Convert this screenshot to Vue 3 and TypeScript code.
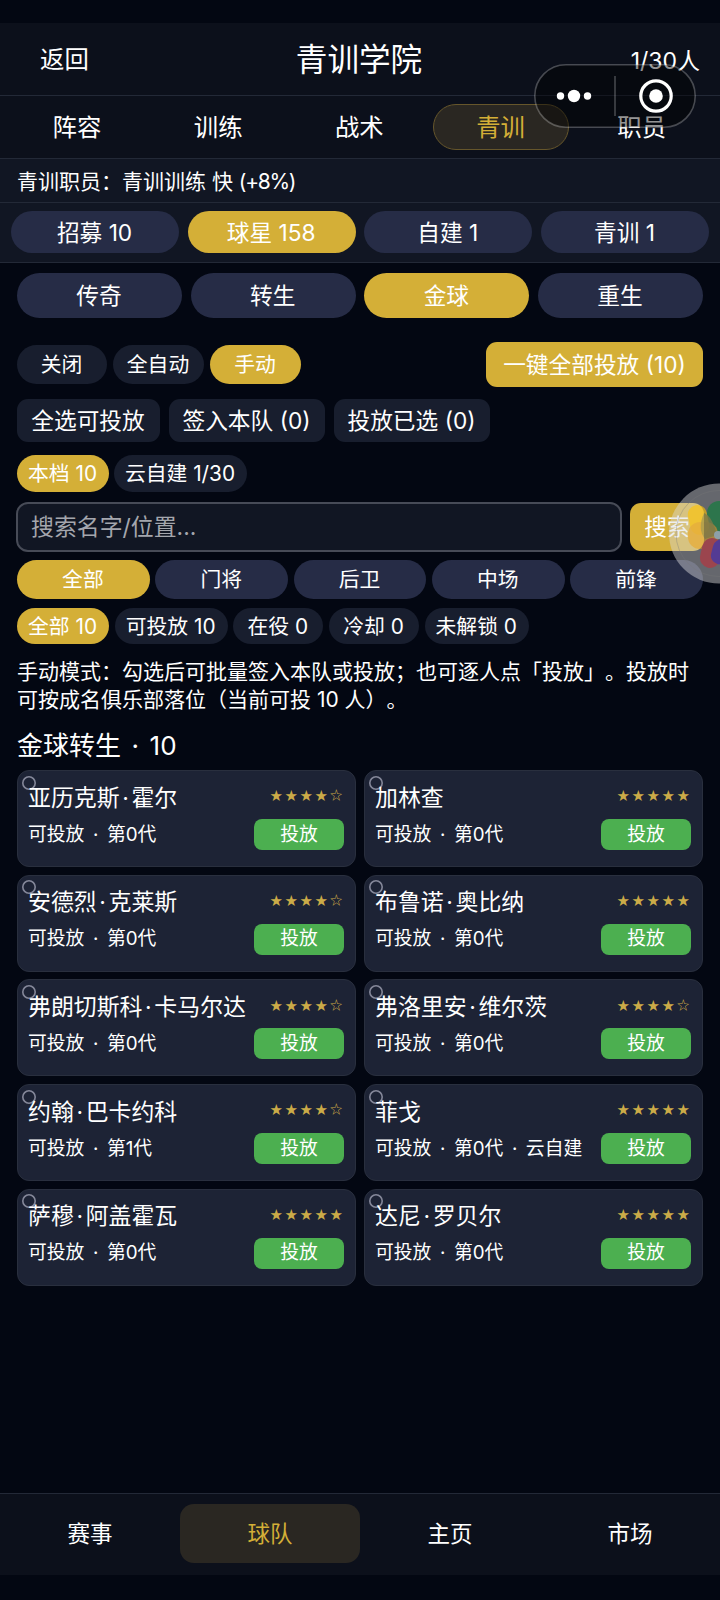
<script setup lang="ts">
interface Chip { label: string; width?: number; active?: boolean }
interface Player { name: string[]; stars: number; meta: string[] }

const tabs = ['阵容', '训练', '战术', '青训', '职员']
const categories: Chip[] = [
  { label: '招募 10' }, { label: '球星 158', active: true }, { label: '自建 1' }, { label: '青训 1' },
]
const kinds: Chip[] = [
  { label: '传奇' }, { label: '转生' }, { label: '金球', active: true }, { label: '重生' },
]
const modes: Chip[] = [{ label: '关闭' }, { label: '全自动' }, { label: '手动', active: true }]
const batch: Chip[] = [
  { label: '全选可投放', width: 143 }, { label: '签入本队 (0)', width: 156 }, { label: '投放已选 (0)', width: 156 },
]
const sources: Chip[] = [{ label: '本档 10', width: 92, active: true }, { label: '云自建 1/30', width: 133 }]
const positions: Chip[] = [
  { label: '全部', active: true }, { label: '门将' }, { label: '后卫' }, { label: '中场' }, { label: '前锋' },
]
const states: Chip[] = [
  { label: '全部 10', width: 92, active: true }, { label: '可投放 10', width: 113 },
  { label: '在役 0', width: 90 }, { label: '冷却 0', width: 90 }, { label: '未解锁 0', width: 104 },
]
const players: Player[] = [
  { name: ['亚历克斯', '霍尔'], stars: 4, meta: ['可投放', '第0代'] },
  { name: ['加林查'], stars: 5, meta: ['可投放', '第0代'] },
  { name: ['安德烈', '克莱斯'], stars: 4, meta: ['可投放', '第0代'] },
  { name: ['布鲁诺', '奥比纳'], stars: 5, meta: ['可投放', '第0代'] },
  { name: ['弗朗切斯科', '卡马尔达'], stars: 4, meta: ['可投放', '第0代'] },
  { name: ['弗洛里安', '维尔茨'], stars: 4, meta: ['可投放', '第0代'] },
  { name: ['约翰', '巴卡约科'], stars: 4, meta: ['可投放', '第1代'] },
  { name: ['菲戈'], stars: 5, meta: ['可投放', '第0代', '云自建'] },
  { name: ['萨穆', '阿盖霍瓦'], stars: 5, meta: ['可投放', '第0代'] },
  { name: ['达尼', '罗贝尔'], stars: 5, meta: ['可投放', '第0代'] },
]
const nav = ['赛事', '球队', '主页', '市场']
const rating = (n: number): string => '★'.repeat(n) + '☆'.repeat(5 - n)
</script>

<template>
  <div class="screen">
    <header class="header">
      <span class="back">返回</span>
      <h1>青训学院</h1>
      <span class="total">1/30人</span>
    </header>
    <nav class="tabs">
      <div v-for="t in tabs" :key="t" class="tab" :class="{ active: t === '青训' }">{{ t }}</div>
    </nav>
    <div class="staff"><span>青训职员：青训训练 快 <span class="bonus">(+8%)</span></span></div>
    <div class="categories">
      <div v-for="c in categories" :key="c.label" class="pill" :class="{ active: c.active }">{{ c.label }}</div>
    </div>

    <main class="content">
      <div class="kinds">
        <div v-for="c in kinds" :key="c.label" class="pill" :class="{ active: c.active }">{{ c.label }}</div>
      </div>
      <div class="mode-row">
        <div class="modes">
          <div v-for="c in modes" :key="c.label" class="chip" :class="{ active: c.active }">{{ c.label }}</div>
        </div>
        <button class="all">一键全部投放 (10)</button>
      </div>
      <div class="batch">
        <div v-for="c in batch" :key="c.label" class="action" :style="{ width: c.width + 'px' }">{{ c.label }}</div>
      </div>
      <div class="sources">
        <div v-for="c in sources" :key="c.label" class="chip" :class="{ active: c.active }" :style="{ width: c.width + 'px' }">{{ c.label }}</div>
      </div>
      <div class="search">
        <div class="field">搜索名字/位置...</div>
        <button class="go">搜索</button>
      </div>
      <div class="positions">
        <div v-for="c in positions" :key="c.label" class="pill" :class="{ active: c.active }">{{ c.label }}</div>
      </div>
      <div class="states">
        <div v-for="c in states" :key="c.label" class="chip" :class="{ active: c.active }" :style="{ width: c.width + 'px' }">{{ c.label }}</div>
      </div>
      <p class="hint">手动模式：勾选后可批量签入本队或投放；也可逐人点「投放」。投放时<br>可按成名俱乐部落位（当前可投 10 人）。</p>
      <h2>金球转生<span class="dot wide"> · </span>10</h2>
      <div class="grid">
        <article v-for="p in players" :key="p.name[0]" class="card">
          <svg class="check" width="16" height="16" viewBox="0 0 16 16"><circle cx="8" cy="8" r="6.200" /></svg>
          <div class="line">
            <span class="name"><template v-for="(part, i) in p.name" :key="part"><span v-if="i" class="dot">·</span>{{ part }}</template></span>
            <span class="stars">{{ rating(p.stars) }}</span>
          </div>
          <div class="line second">
            <span class="meta"><template v-for="(part, i) in p.meta" :key="part"><span v-if="i" class="dot wide"> · </span>{{ part }}</template></span>
            <button class="release">投放</button>
          </div>
        </article>
      </div>
    </main>

    <footer class="nav">
      <div v-for="n in nav" :key="n" class="nav-item" :class="{ active: n === '球队' }">{{ n }}</div>
    </footer>

    <svg class="capsule" width="162" height="64" viewBox="0 0 162 64">
      <rect x="0.8" y="0.8" width="160.4" height="62.4" rx="31.2" fill="#000" fill-opacity=".42" stroke="#fff" stroke-opacity=".25" stroke-width="1.6" />
      <path d="M81 12v40" stroke="#fff" stroke-opacity=".25" stroke-width="1.6" />
      <circle cx="26.500" cy="32" r="3.7" fill="#fff" />
      <circle cx="40" cy="32" r="6.2" fill="#fff" />
      <circle cx="53.500" cy="32" r="3.7" fill="#fff" />
      <circle cx="122" cy="32" r="15.200" fill="none" stroke="#fff" stroke-width="3.200" />
      <circle cx="122" cy="32" r="6.800" fill="#fff" />
    </svg>

    <svg class="float" width="51" height="102" viewBox="0 0 51 102">
      <circle cx="50" cy="50.500" r="50" fill="#dadada" fill-opacity=".46" />
      <circle cx="50" cy="50.500" r="43" fill="none" stroke="#777" stroke-opacity=".35" />
      <g opacity=".6">
        <rect x="38" y="18" width="24" height="32" rx="12" fill="#087f37" />
        <rect x="20" y="22" width="19" height="30" rx="9.500" fill="#ffc400" transform="rotate(-12 29 37)" />
        <rect x="19" y="39" width="30" height="27" rx="12" fill="#f0a010" fill-opacity=".8" />
        <path d="M35 30q8 3 13 22l-12 4q-8-10-1-26z" fill="#8d8430" fill-opacity=".8" />
        <rect x="32" y="55" width="20" height="30" rx="10" fill="#c0303a" transform="rotate(12 42 70)" />
        <rect x="43" y="56" width="17" height="25" rx="8.500" fill="#4a1fae" transform="rotate(14 50 68)" />
        <circle cx="49" cy="52" r="4" fill="#a9c6d2" />
      </g>
    </svg>
  </div>
</template>

<style>
html, body { background: #030712; }
</style>

<style scoped>
* { box-sizing: border-box; }
.screen {
  position: relative; width: 720px; height: 1600px; overflow: hidden; padding-top: 23px;
  display: flex; flex-direction: column; background: #030712; color: #fff;
  font-family: Inter, "Noto Sans CJK SC", sans-serif; font-weight: 400; line-height: 1; white-space: nowrap;
  text-spacing-trim: space-all;
}
button { border: 0; padding: 1px 0 0; font-family: inherit; color: #fff; line-height: 1; }
h1, h2, p { margin: 0; font-weight: 400; }
.header {
  height: 73px; flex: none; display: grid; grid-template-columns: 1fr 200px 1fr; align-items: center;
  background: #0c101b; border-bottom: 1px solid #232937; font-size: 24.4px;
}
.back { padding: 1px 0 0 40px; }
h1 { font-size: 31.6px; text-align: center; margin-left: -2px; padding-top: 1px; }
.total { text-align: right; padding-right: 20px; font-size: 23px; padding-top: 4px; }
.tabs {
  height: 63px; flex: none; display: grid; grid-template-columns: repeat(5, 136px); gap: 5.200px;
  padding: 8px 9px; background: #0c101b; border-bottom: 1px solid #232937; font-size: 24.400px;
}
.tab { display: flex; align-items: center; justify-content: center; border-radius: 24px; border: 1px solid transparent; }
.tab.active { background: #2a2722; border-color: #66562b; color: #d4af37; }
.staff {
  height: 44px; flex: none; padding: 2px 0 0 17px; display: flex; align-items: center;
  background: #111623; border-bottom: 1px solid #232937; font-size: 21px;
}
.bonus { letter-spacing: -1.300px; }
.categories {
  height: 60px; flex: none; display: grid; grid-template-columns: repeat(4, 1fr); gap: 8.600px; padding: 8px 11px 9px;
  background: #111623; border-bottom: 1px solid #232937;
}
.pill, .chip, .action { display: flex; align-items: center; justify-content: center; padding: 2px 1px 0 0; }
.pill { border-radius: 23px; background: #262c46; font-size: 22.700px; }
.chip { border-radius: 20px; background: #181e2e; font-size: 20.800px; }
.active.pill, .active.chip { background: #d4af37; }
.content { padding: 10px 17px 0; }
.kinds { height: 45px; display: grid; grid-template-columns: repeat(4, 1fr); gap: 8.600px; }
.mode-row { margin-top: 24px; height: 45px; display: flex; justify-content: space-between; align-items: center; }
.modes { height: 39px; display: grid; grid-template-columns: 90px 91px 91px; gap: 6px; }
.all { width: 217px; height: 45px; border-radius: 11px; background: #d4af37; font-size: 22.700px; }
.batch { margin-top: 12px; height: 43px; display: flex; gap: 9px; }
.action { border-radius: 11px; background: #181e2e; font-size: 22.700px; }
.sources { margin-top: 13px; height: 37px; display: flex; gap: 5px; }
.search { margin: 10px -1px 0; height: 50px; display: flex; align-items: center; gap: 8px; }
.field {
  flex: 1; height: 50px; border: 2px solid #474b57; border-radius: 12px; background: #111623; color: #a4a6ad;
  padding: 1px 0 0 13px; display: flex; align-items: center; font-size: 22.900px;
}
.go { width: 74px; height: 48px; border-radius: 11px; background: #d4af37; font-size: 22.700px; }
.positions { margin-top: 8px; height: 39px; display: grid; grid-template-columns: repeat(5, 1fr); gap: 5.500px; }
.positions .pill { font-size: 20.800px; }
.states { margin-top: 9px; height: 36px; display: flex; gap: 5.700px; }
.hint { margin-top: 14px; font-size: 21px; line-height: 28px; }
h2 { margin-top: 17px; height: 31px; line-height: 30px; font-size: 26px; }
.dot { display: inline-block; width: .52em; text-align: center; white-space: pre; }
.dot.wide { width: 1.2em; }
h2 .dot.wide { width: 1.1em; }
.grid { margin-top: 8px; display: grid; grid-template-columns: 1fr 1fr; grid-auto-rows: 97px; gap: 7.700px 8px; }
.card { position: relative; padding: 14px 11px 0 10px; border: 1px solid #292f3e; border-radius: 12px; background: #1d2335; }
.check { position: absolute; left: 3px; top: 3.500px; fill: none; stroke: #85889a; stroke-width: 1.600px; }
.line { position: relative; height: 26px; display: flex; align-items: center; justify-content: space-between; }
.name { font-size: 22.900px; }
.stars { font-family: "Noto Sans CJK SC", sans-serif; font-size: 12.500px; letter-spacing: 2.500px; color: #cbab48; margin: -5px -1px 0 0; }
.second { margin-top: 8px; height: 31px; }
.meta { font-size: 18.800px; padding-top: 1px; }
.release { width: 90px; height: 31px; border-radius: 8px; background: #4caf50; font-size: 18.800px; }
.nav {
  position: absolute; left: 0; bottom: 25px; width: 720px; height: 82px; padding: 10px 0 12px;
  display: grid; grid-template-columns: repeat(4, 1fr); background: #0c101b; border-top: 1px solid #232937;
}
.nav-item { display: flex; align-items: center; justify-content: center; border-radius: 14px; font-size: 22.500px; padding-top: 1px; }
.nav-item.active { background: #2a2722; color: #d4af37; }
.capsule { position: absolute; left: 534px; top: 64px; }
.float { position: absolute; right: 0; top: 483px; }
</style>
